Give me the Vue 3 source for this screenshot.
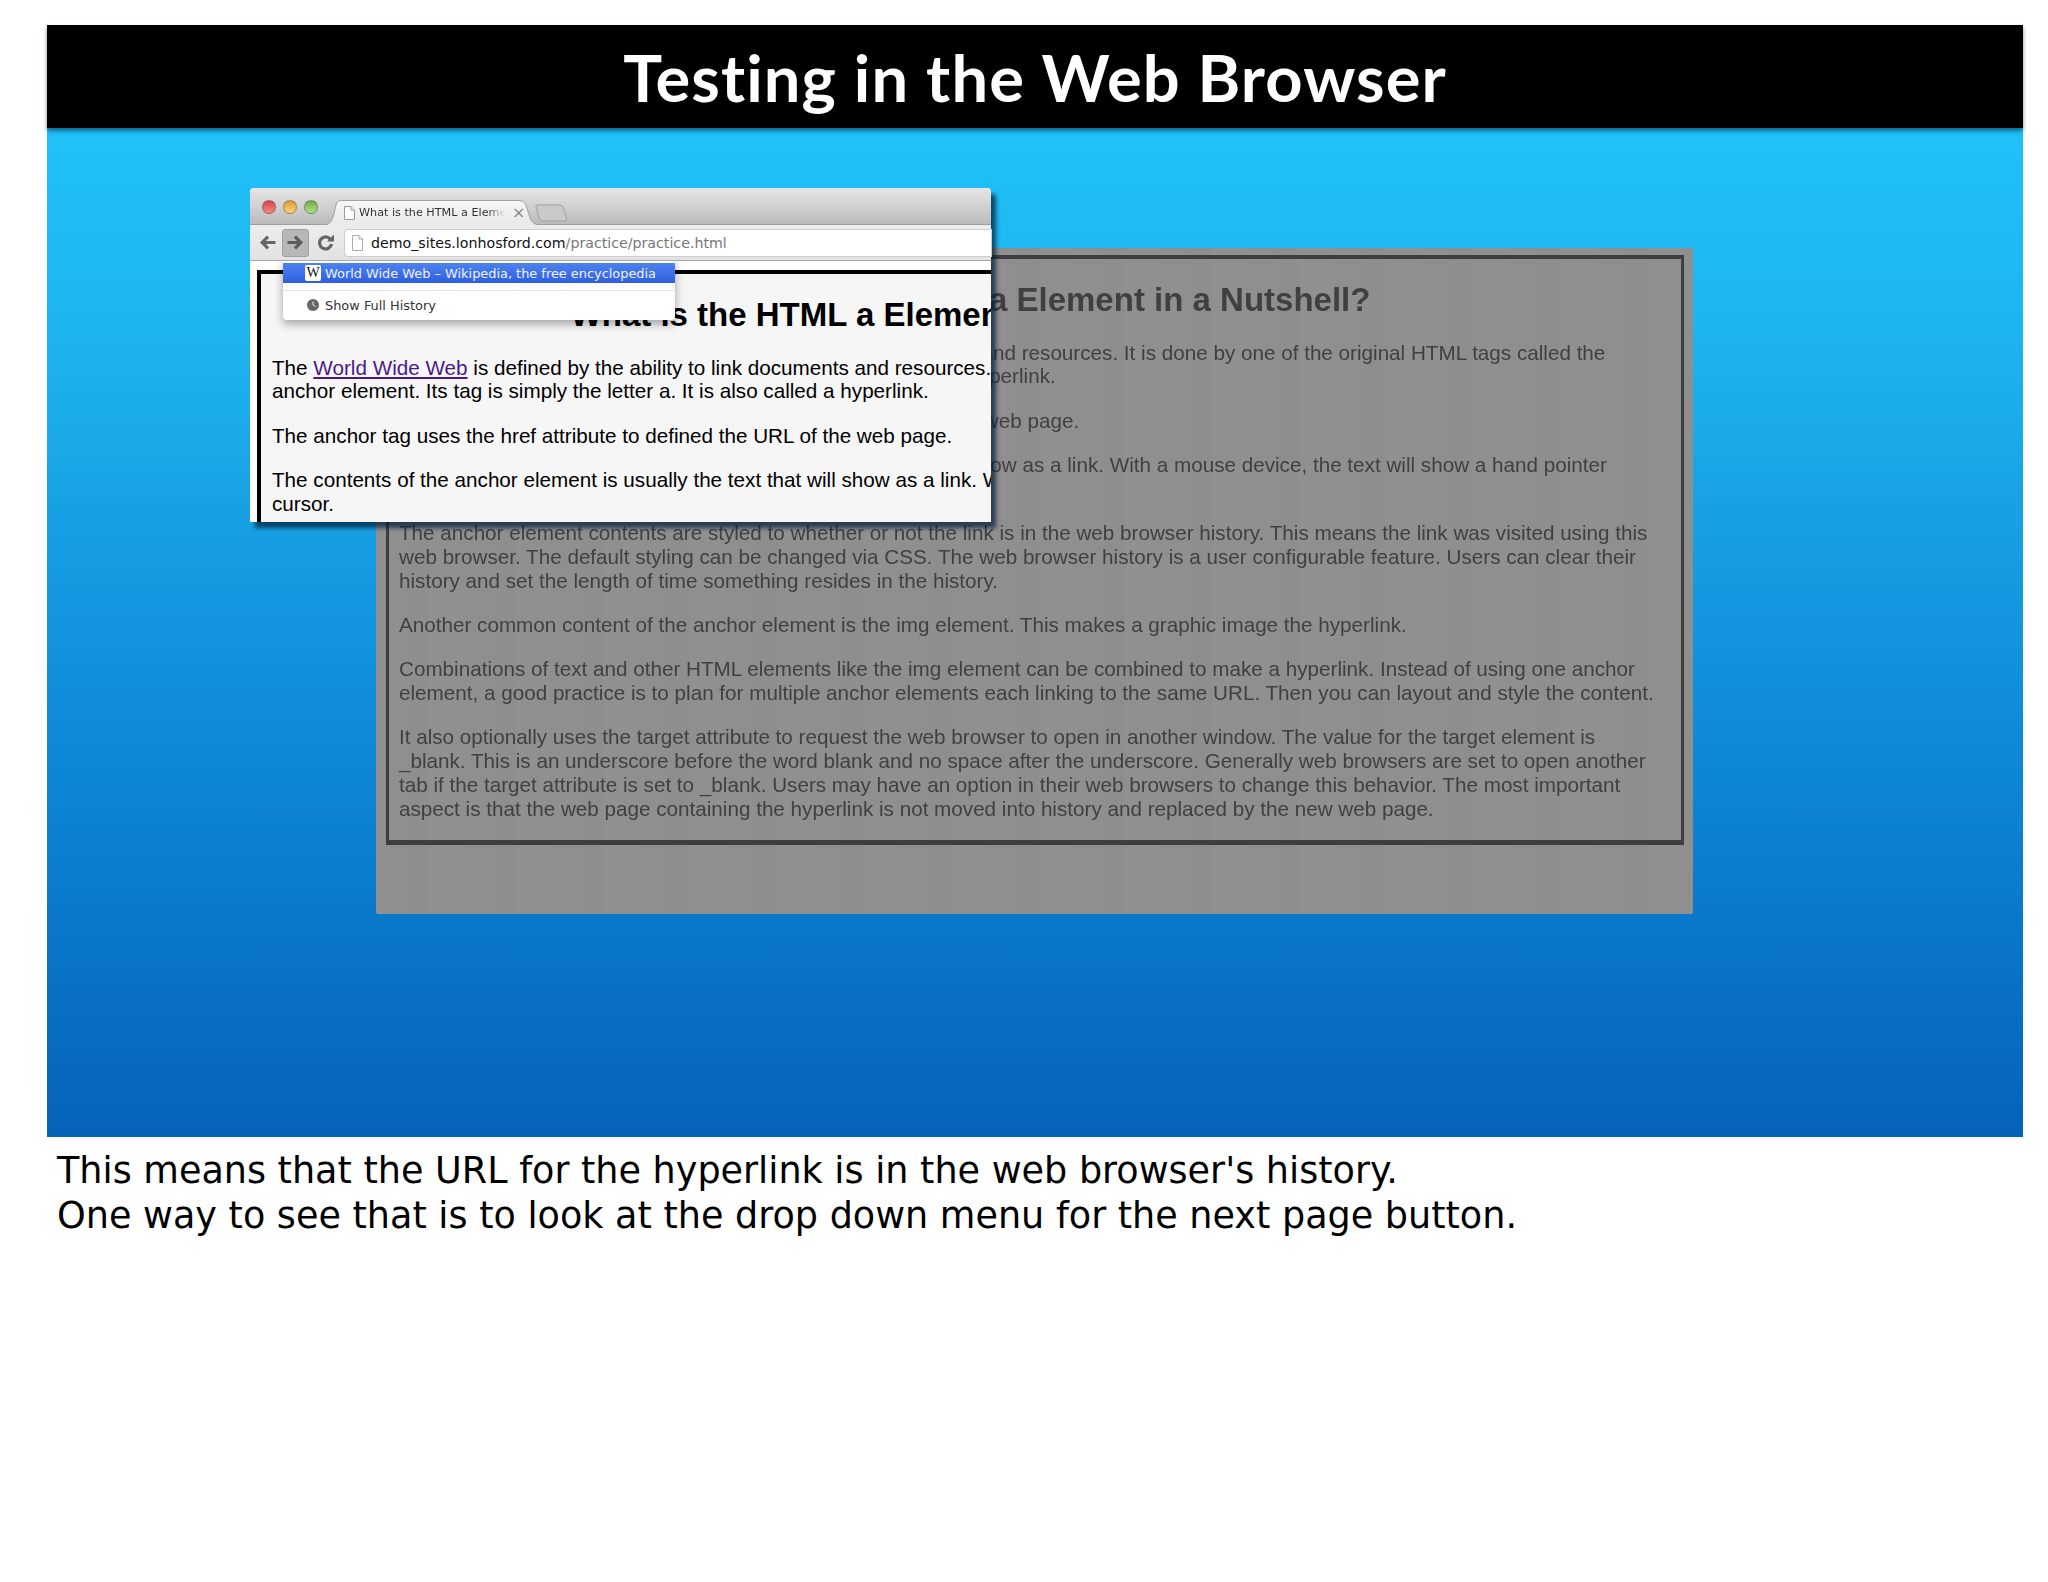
<template>
  <div class="page">
    <div class="slide">
      <header class="slide-title">
        <h1>Testing in the Web Browser</h1>
      </header>
      <main class="stage">
        <article class="doc doc-back">
          <div class="doc-frame">
            <h2>What is the HTML a Element in a Nutshell?</h2>
            <p v-for="(para, i) in paragraphs" :key="i">
              <span v-for="line in para" :key="line" class="line">{{ line }}</span>
            </p>
          </div>
        </article>

        <section class="browser">
          <div class="tabstrip">
            <div class="traffic">
              <span class="dot red"></span>
              <span class="dot yellow"></span>
              <span class="dot green"></span>
            </div>
            <div class="tab">
              <svg class="tab-shape" viewBox="0 0 214 25" width="214" height="25">
                <defs>
                  <linearGradient id="tabFill" x1="0" y1="0" x2="0" y2="1">
                    <stop offset="0" stop-color="#f7f7f7" />
                    <stop offset="1" stop-color="#e9e9e9" />
                  </linearGradient>
                </defs>
                <path d="M0 25C6 24 7 20 9 14l2-9q1-4.500 6-4.500h178q4 0 6 4.500l4 13q2 6 9 7z" fill="url(#tabFill)" />
                <path d="M0 25C6 24 7 20 9 14l2-9q1-4.500 6-4.500h178q4 0 6 4.500l4 13q2 6 9 7" fill="none" stroke="#a2a2a2" />
              </svg>
              <svg class="file-icon" viewBox="0 0 11 14" width="11" height="14">
                <path d="M.5.500h6.500l3.500 3.500v9.500H.5z" fill="#fff" stroke="#9a9a9a" />
                <path d="M7 .5V4h3.500" fill="#eee" stroke="#9a9a9a" />
              </svg>
              <span class="tab-title">What is the HTML a Eleme</span>
              <span class="tab-close">×</span>
            </div>
            <svg class="new-tab" viewBox="0 0 33 18" width="33" height="18">
              <path d="M1.500 1h23q3 0 4 3l3 10q.5 3-2 3H8q-3 0-4-3L1 3q0-2 .5-2z" fill="#c9c9c9" stroke="#a0a0a0" />
            </svg>
          </div>
          <div class="toolbar">
            <svg class="nav-icon" viewBox="0 0 16 16" width="17" height="17">
              <path d="M15.500 8H3M8.500 2.500 3 8l5.500 5.500" fill="none" stroke="#666" stroke-width="3" />
            </svg>
            <div class="nav-pressed">
              <svg viewBox="0 0 16 16" width="17" height="17">
                <path d="M.5 8H13M7.500 2.500 13 8l-5.500 5.500" fill="none" stroke="#5c5c5c" stroke-width="3" />
              </svg>
            </div>
            <svg class="nav-icon reload" viewBox="0 0 16 16" width="16" height="17">
              <path d="M12.500 5a6 6 0 1 0 1 4.500" fill="none" stroke="#666" stroke-width="3.200" />
              <path d="M9 7h7V0z" fill="#666" />
            </svg>
            <div class="omnibox">
              <svg class="file-icon" viewBox="0 0 11 16" width="11" height="16">
                <path d="M.5.500h6.500l3.500 3.500v11.500H.5z" fill="#fff" stroke="#aaa" />
                <path d="M7 .5V4h3.500" fill="#eee" stroke="#aaa" />
              </svg>
              <span class="url"><b>demo_sites.lonhosford.com</b>/practice/practice.html</span>
            </div>
          </div>
          <div class="viewport">
            <div class="doc doc-front">
              <div class="doc-frame">
                <h2>What is the HTML a Element in a Nutshell?</h2>
                <p v-for="(para, i) in paragraphs" :key="i">
                  <span v-for="(line, j) in para" :key="line" class="line">
                    <template v-if="i === 0 && j === 0">The <a>World Wide Web</a> {{ line.slice(19) }}</template>
                    <template v-else>{{ line }}</template>
                  </span>
                </p>
              </div>
            </div>
            <div class="history-menu">
              <div class="menu-item selected">
                <span class="wiki">W</span>
                <span>World Wide Web – Wikipedia, the free encyclopedia</span>
              </div>
              <div class="menu-sep"></div>
              <div class="menu-item">
                <svg class="clock" viewBox="0 0 12 12" width="12" height="12">
                  <circle cx="6" cy="6" r="6" fill="#666" />
                  <path d="M6 2.500V6l2.500 1.500" fill="none" stroke="#eee" stroke-width="1" />
                </svg>
                <span>Show Full History</span>
              </div>
            </div>
          </div>
        </section>
      </main>
    </div>
    <div class="caption">
      This means that the URL for the hyperlink is in the web browser's history.<br>
      One way to see that is to look at the drop down menu for the next page button.
    </div>
  </div>
</template>

<script setup>
const paragraphs = [
  [
    'The World Wide Web is defined by the ability to link documents and resources. It is done by one of the original HTML tags called the',
    'anchor element. Its tag is simply the letter a. It is also called a hyperlink.',
  ],
  ['The anchor tag uses the href attribute to defined the URL of the web page.'],
  [
    'The contents of the anchor element is usually the text that will show as a link. With a mouse device, the text will show a hand pointer',
    'cursor.',
  ],
  [
    'The anchor element contents are styled to whether or not the link is in the web browser history. This means the link was visited using this',
    'web browser. The default styling can be changed via CSS. The web browser history is a user configurable feature. Users can clear their',
    'history and set the length of time something resides in the history.',
  ],
  ['Another common content of the anchor element is the img element. This makes a graphic image the hyperlink.'],
  [
    'Combinations of text and other HTML elements like the img element can be combined to make a hyperlink. Instead of using one anchor',
    'element, a good practice is to plan for multiple anchor elements each linking to the same URL. Then you can layout and style the content.',
  ],
  [
    'It also optionally uses the target attribute to request the web browser to open in another window. The value for the target element is',
    '_blank. This is an underscore before the word blank and no space after the underscore. Generally web browsers are set to open another',
    'tab if the target attribute is set to _blank. Users may have an option in their web browsers to change this behavior. The most important',
    'aspect is that the web page containing the hyperlink is not moved into history and replaced by the new web page.',
  ],
];
</script>

<style>
html, body {
  background: #fff;
}
</style>

<style scoped>
.page {
  width: 2048px;
  height: 1582px;
  padding: 25px 25px 0 47px;
  box-sizing: border-box;
  overflow: hidden;
  background: #fff;
}

.slide {
  width: 1976px;
  height: 1112px;
  display: flex;
  flex-direction: column;
}

.slide-title {
  height: 103px;
  background: #000;
  display: flex;
  justify-content: center;
  box-shadow: 0 3px 4px rgba(0, 40, 70, 0.55);
  position: relative;
  z-index: 2;
}

.slide-title h1 {
  margin: 0;
  color: #fff;
  font: 700 65px/105px Lato, sans-serif;
  letter-spacing: 1.1px;
  font-variant-ligatures: none;
}

.stage {
  flex: 1;
  position: relative;
  background: linear-gradient(#20c1f8 0%, #1eb4ef 20%, #0f8ad9 60%, #0563b9 100%);
}

.doc {
  font-family: "Liberation Sans", Arial, sans-serif;
  font-size: 20.67px;
  line-height: 23.8px;
  white-space: nowrap;
}

.doc h2 {
  margin: 0;
  text-align: center;
  font-size: 33px;
  line-height: 41px;
  font-weight: 700;
}

.doc p {
  margin: 20.5px 0 0;
}

.line {
  display: block;
}

.doc-back {
  position: absolute;
  left: 329px;
  top: 120px;
  width: 1317px;
  height: 666px;
  background: repeating-linear-gradient(90deg, #8f8f90 0 31px, #8e8e8f 31px 53px, #909091 53px 87px);
  color: #404040;
  padding: 7px 9px 0 10px;
  box-sizing: border-box;
  border-radius: 2px;
  filter: blur(0.35px);
}

.doc-back .doc-frame {
  height: 590px;
  border: solid #3e3e3e;
  border-width: 4px 3px 5px;
  box-sizing: border-box;
  padding: 20px 6px 0 10px;
  overflow: hidden;
}

.browser {
  position: absolute;
  left: 203px;
  top: 60px;
  width: 741px;
  height: 334px;
  display: flex;
  flex-direction: column;
  background: #fff;
  box-shadow: 5px 6px 4px rgba(0, 25, 50, 0.7);
  border-radius: 4px 4px 0 0;
}

.tabstrip {
  height: 37px;
  flex: none;
  display: flex;
  background: linear-gradient(#e6e6e6, #bbb);
  border-bottom: 1px solid #9e9e9e;
  box-sizing: border-box;
  border-radius: 4px 4px 0 0;
}

.traffic {
  display: flex;
  gap: 7px;
  padding: 12px 0 0 12px;
}

.dot {
  width: 14px;
  height: 14px;
  border-radius: 50%;
  border: 1px solid rgba(90, 90, 90, 0.5);
  box-sizing: border-box;
}

.red { background: linear-gradient(#d8454a, #f58a80); }
.yellow { background: linear-gradient(#dc9c2c, #fbd778); }
.green { background: linear-gradient(#6fae45, #b5e08a); }

.tab {
  position: relative;
  flex: none;
  margin: 12px 0 0 7px;
  width: 214px;
  height: 25px;
  display: flex;
  align-items: center;
  padding-left: 19px;
  box-sizing: border-box;
  font: 11.2px "DejaVu Sans", sans-serif;
  color: #333;
}

.tab-shape {
  position: absolute;
  left: 0;
  top: 0;
}

.tab .file-icon {
  position: relative;
  flex: none;
}

.tab-title {
  position: relative;
  width: 146px;
  margin-left: 4px;
  overflow: hidden;
  white-space: nowrap;
  -webkit-mask-image: linear-gradient(90deg, #000 88%, transparent);
  mask-image: linear-gradient(90deg, #000 88%, transparent);
}

.tab-close {
  position: relative;
  margin-left: 7px;
  color: #8a8a8a;
  font-size: 16px;
}

.new-tab {
  flex: none;
  margin: 16px 0 0 -4px;
}

.toolbar {
  height: 36px;
  flex: none;
  display: flex;
  align-items: center;
  background: linear-gradient(#ededed, #e2e2e2);
  border-bottom: 1px solid #aaa;
  box-sizing: border-box;
  padding-left: 9px;
}

.nav-pressed {
  width: 27px;
  height: 28px;
  margin-left: 6px;
  background: #b7b7b7;
  border: 1px solid #a0a0a0;
  border-radius: 3px;
  box-sizing: border-box;
  display: flex;
  align-items: center;
  justify-content: center;
}

.reload {
  margin: 0 11px 0 9px;
}

.omnibox {
  flex: 1;
  height: 26px;
  background: #fff;
  border-radius: 3px 0 0 3px;
  box-shadow: 0 0 0 1px #cfcfcf;
  display: flex;
  align-items: center;
  gap: 8px;
  padding-left: 7px;
}

.url {
  font: 14.2px "DejaVu Sans", sans-serif;
  color: #777;
}

.url b {
  font-weight: 400;
  color: #111;
}

.viewport {
  flex: 1;
  position: relative;
  overflow: hidden;
  background: #fff;
}

.doc-front {
  position: absolute;
  left: 7px;
  top: 9px;
  bottom: 0;
  width: 1279px;
  color: #000;
  background: #f6f6f7;
}

.doc-front .doc-frame {
  border: solid #000;
  border-width: 4px 0 0 4px;
  padding: 20px 0 0 11px;
  height: 100%;
  box-sizing: border-box;
}

.doc-front a {
  color: #4a1a8c;
  text-decoration: underline;
}

.history-menu {
  position: absolute;
  left: 33px;
  top: -2px;
  width: 392px;
  height: 61px;
  background: #fff;
  border-radius: 4px;
  box-shadow: 0 4px 10px rgba(0, 0, 0, 0.35);
  padding-top: 4px;
  box-sizing: border-box;
  font: 12.9px "DejaVu Sans", sans-serif;
  color: #333;
}

.menu-item {
  height: 20px;
  display: flex;
  align-items: center;
  gap: 4px;
  padding-left: 22px;
}

.menu-item.selected {
  background: linear-gradient(#4d82f0, #2e5fe0);
  color: #eef3ff;
}

.wiki {
  width: 16px;
  height: 16px;
  background: #fff;
  border-radius: 2px;
  color: #111;
  font: 14px/16px "Liberation Serif", serif;
  text-align: center;
}

.menu-sep {
  height: 1px;
  background: #e4e4e4;
  margin: 7px 0 4px;
}

.clock {
  margin: 0 2px 0 2px;
}

.caption {
  padding: 12px 0 0 10px;
  font: 36.55px/44.5px "DejaVu Sans", sans-serif;
  color: #000;
}
</style>
